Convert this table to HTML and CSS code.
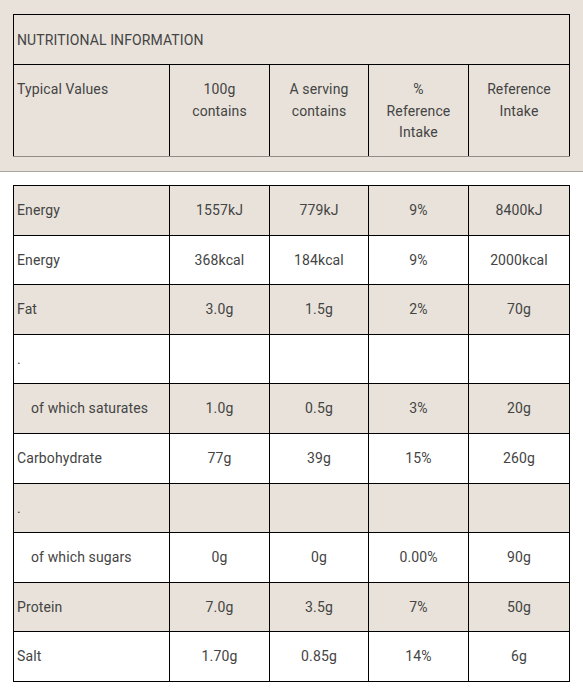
FILE: index.html
```html
<!DOCTYPE html>
<html>
<head>
<meta charset="utf-8">
<link rel="stylesheet" href="styles.css">
</head>
<body>
<div class="head-panel">
  <table class="nut nut-head">
    <colgroup><col class="c1"><col class="c2"><col class="c3"><col class="c4"><col class="c5"></colgroup>
    <tr class="title-row"><td colspan="5">NUTRITIONAL INFORMATION</td></tr>
    <tr class="cols-row">
      <td class="label">Typical Values</td>
      <td>100g<br>contains</td>
      <td>A serving<br>contains</td>
      <td>%<br>Reference<br>Intake</td>
      <td>Reference<br>Intake</td>
    </tr>
  </table>
</div>
<div class="body-panel">
  <table class="nut nut-body">
    <colgroup><col class="c1"><col class="c2"><col class="c3"><col class="c4"><col class="c5"></colgroup>
    <tr class="shade"><td class="label">Energy</td><td>1557kJ</td><td>779kJ</td><td>9%</td><td>8400kJ</td></tr>
    <tr><td class="label">Energy</td><td>368kcal</td><td>184kcal</td><td>9%</td><td>2000kcal</td></tr>
    <tr class="shade"><td class="label">Fat</td><td>3.0g</td><td>1.5g</td><td>2%</td><td>70g</td></tr>
    <tr><td class="label">.</td><td></td><td></td><td></td><td></td></tr>
    <tr class="shade"><td class="label sub">of which saturates</td><td>1.0g</td><td>0.5g</td><td>3%</td><td>20g</td></tr>
    <tr><td class="label">Carbohydrate</td><td>77g</td><td>39g</td><td>15%</td><td>260g</td></tr>
    <tr class="shade"><td class="label">.</td><td></td><td></td><td></td><td></td></tr>
    <tr><td class="label sub">of which sugars</td><td>0g</td><td>0g</td><td>0.00%</td><td>90g</td></tr>
    <tr class="shade"><td class="label">Protein</td><td>7.0g</td><td>3.5g</td><td>7%</td><td>50g</td></tr>
    <tr><td class="label">Salt</td><td>1.70g</td><td>0.85g</td><td>14%</td><td>6g</td></tr>
  </table>
</div>
</body>
</html>
```
FILE: styles.css
```css
html, body {
  margin: 0;
  padding: 0;
  background: #ffffff;
}
body {
  font-family: Roboto, "Liberation Sans", sans-serif;
  font-size: 14px;
  letter-spacing: 0.12px;
  color: #444444;
}
.head-panel {
  background: #e8e2da;
  padding: 14px 0 14px 13px;
  border-bottom: 1px solid #a9a6a2;
}
.body-panel {
  padding: 13px 0 0 13px;
}
.nut {
  border-collapse: collapse;
  table-layout: fixed;
  width: 556px;
}
.c1 { width: 156px; }
.c2 { width: 100px; }
.c3 { width: 99px; }
.c4 { width: 100px; }
.c5 { width: 101px; }
.nut td {
  border: 1px solid #000;
  text-align: center;
  padding: 0 3px;
  line-height: 21.5px;
}
.nut td.label {
  text-align: left;
}
.title-row td {
  height: 47px;
  padding-top: 2px;
  text-align: left;
  vertical-align: middle;
}
.cols-row td {
  height: 77px;
  vertical-align: top;
  padding-top: 14px;
}
.nut-head tr.cols-row td {
  border-bottom: 1px solid #8f8c88;
}
.nut-body tr td {
  height: 47.6px;
  vertical-align: middle;
  padding-top: 1px;
  padding-bottom: 0;
}
.nut-body tr.shade td {
  background: #e8e2da;
}
.nut td.sub {
  padding-left: 17px;
}
```
